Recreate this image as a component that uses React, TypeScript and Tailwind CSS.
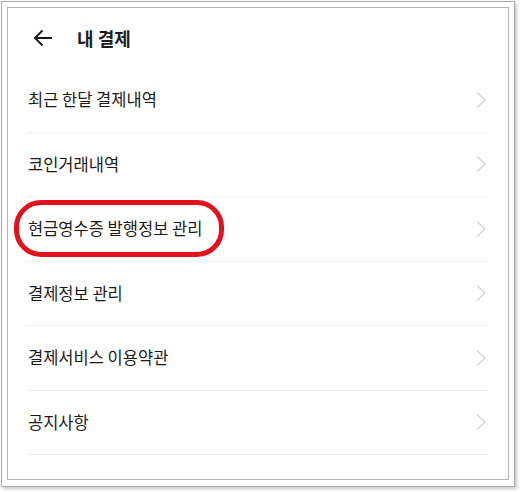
import { FC } from "react";

const items = [
    "최근 한달 결제내역",
    "코인거래내역",
    "현금영수증 발행정보 관리",
    "결제정보 관리",
    "결제서비스 이용약관",
    "공지사항",
];

const Chevron: FC = () => (
    <svg width="12" height="18" viewBox="0 0 12 18" fill="none">
        <path d="M2 1.5 L10 9 L2 16.5" stroke="#d4d4d4" strokeWidth="1.4" />
    </svg>
);

export default function App() {
    return (
        <div className="w-[521px] h-[492px] bg-white pl-px pt-px" style={{ fontFamily: '"Noto Sans CJK KR", "Noto Sans", sans-serif' }}>
            <div className="w-[514px] h-[486px] border border-[#a9a9a9] bg-white p-[5px] shadow-[2px_2px_3px_rgba(0,0,0,0.22)]">
                <div className="relative w-[502px] h-[473px] border border-[#b4b4b4] bg-white">
                    <div className="flex items-center h-[60px] pl-[25px]">
                        <svg width="20" height="18" viewBox="0 0 20 18" fill="none">
                            <path d="M19 9 H2 M9.5 1.5 L2 9 L9.5 16.5" stroke="#1c1c1c" strokeWidth="2" />
                        </svg>
                        <span className="ml-[24px] text-[18px] font-bold text-[#1c1c1c] leading-none">내 결제</span>
                    </div>
                    <div className="pl-[18px] pr-[19px]">
                        {items.map((item) => (
                            <div key={item} className="flex items-center justify-between h-[64.5px] border-b border-[#efefef]">
                                <span className="pl-[2px] text-[16.5px] text-[#1a1a1a]">{item}</span>
                                <span className="pr-[2px]"><Chevron /></span>
                            </div>
                        ))}
                    </div>
                    <div className="absolute left-[6px] top-[192px] w-[210px] h-[57px] rounded-[27px] border-[5px] border-[#e3111c]" />
                </div>
            </div>
        </div>
    );
}
